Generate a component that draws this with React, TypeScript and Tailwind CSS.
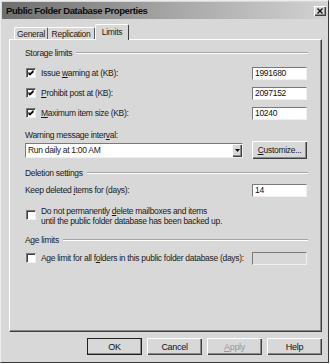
const font = "font-['Liberation_Sans',Arial,sans-serif]";

const raised =
  "bg-[#d8d8d8] shadow-[inset_1px_1px_#ffffff,inset_-1px_-1px_#404040,inset_-2px_-2px_#8a8a8a]";
const sunken = "border border-t-[#7a7a7a] border-l-[#7a7a7a] border-b-[#f0f0f0] border-r-[#f0f0f0]";

function Check({ on }: { on?: boolean }) {
  return (
    <div
      className={`w-[10px] h-[10px] shrink-0 bg-white ${sunken} shadow-[inset_1px_1px_#404040] flex items-center justify-center`}
    >
      {on && (
        <svg width="8" height="8" viewBox="0 0 8 8">
          <path d="M1.5 3.5 L3 5 L6.5 1.5 M1.5 4.5 L3 6 L6.5 2.5" stroke="#111" strokeWidth="1.2" fill="none" />
        </svg>
      )}
    </div>
  );
}

function Field({ value, disabled }: { value?: string; disabled?: boolean }) {
  return (
    <div
      className={`w-[55px] h-[13px] ${sunken} ${disabled ? "bg-[#d8d8d8]" : "bg-white"} pl-[2px] flex items-center text-[#111]`}
    >
      {value}
    </div>
  );
}

function Group({ title }: { title: string }) {
  return (
    <div className="h-[10px] flex items-center gap-[4px]">
      <span>{title}</span>
      <div className="flex-1 border-t border-t-[#a4a4a4] border-b border-b-white" />
    </div>
  );
}

function LimitRow({ pre, u, post, value }: { pre: string; u: string; post: string; value: string }) {
  return (
    <div className="h-[20px] flex items-center">
      <div className="pl-[1px]">
        <Check on />
      </div>
      <span className="ml-[5px]">
        {pre}
        <u>{u}</u>
        {post}
      </span>
      <div className="ml-auto">
        <Field value={value} />
      </div>
    </div>
  );
}

function Button({ children, main, dim }: { children: React.ReactNode; main?: boolean; dim?: boolean }) {
  return (
    <div
      className={`w-[55px] h-[17px] flex items-center justify-center text-[9px] ${raised} ${
        main ? "outline outline-1 outline-[#202020] -outline-offset-1" : ""
      } ${dim ? "text-[#9a9a9a]" : "text-[#111]"}`}
    >
      {children}
    </div>
  );
}

export default function App() {
  return (
    <div
      className={`w-[330px] h-[364px] bg-white ${font} text-[8.5px] tracking-[-0.3px] leading-[10px] text-[#1a1a1a] whitespace-nowrap`}
    >
      <div className="w-[329px] h-[363px] bg-[#d8d8d8] border border-t-[#ececec] border-l-[#ececec] border-r-[#3a3a3a] border-b-[#3a3a3a] flex flex-col pt-[1px]">
        {/* Title bar */}
        <div className="mx-[1px] h-[17px] bg-linear-to-r from-[#6e6e6e] via-[#a4a4a4] to-[#d2d2d2] flex items-center justify-between pl-[4px] pr-[1px]">
          <span className="text-[9.5px] tracking-[-0.4px] font-bold text-[#0c0c0c]">
            Public Folder Database Properties
          </span>
          <div className={`w-[12px] h-[10px] ${raised} flex items-center justify-center`}>
            <svg width="6" height="6" viewBox="0 0 6 6">
              <path d="M0.5 0.5 L5.5 5.5 M5.5 0.5 L0.5 5.5" stroke="#111" strokeWidth="1.4" />
            </svg>
          </div>
        </div>

        {/* Tabs */}
        <div className="h-[20px] ml-[8px] pl-[5px] flex items-end">
          <div className="w-[34px] h-[12px] border-t border-l border-t-white border-l-white border-r border-r-[#5a5a5a] rounded-t-[2px] flex items-center justify-center">
            General
          </div>
          <div className="w-[47px] h-[12px] border-t border-t-white border-r border-r-[#5a5a5a] rounded-tr-[2px] flex items-center justify-center">
            Replication
          </div>
          <div className="relative z-10 -mb-px w-[34px] h-[16px] bg-[#d8d8d8] border-t border-l border-t-white border-l-white border-r border-r-[#404040] rounded-t-[2px] flex justify-center pt-[2px]">
            Limits
          </div>
        </div>

        {/* Tab panel */}
        <div className="ml-[8px] w-[313px] h-[293px] border border-t-white border-l-white border-r-[#404040] border-b-[#404040] shadow-[inset_-1px_-1px_#8a8a8a] pl-[15px] pr-[13px] flex flex-col">
          <div className="mt-[8px]">
            <Group title="Storage limits" />
          </div>
          <div className="mt-[5px] pr-[1px]">
            <LimitRow pre="Issue " u="w" post="arning at (KB):" value="1991680" />
            <LimitRow pre="" u="P" post="rohibit post at (KB):" value="2097152" />
            <LimitRow pre="" u="M" post="aximum item size (KB):" value="10240" />
          </div>
          <div className="mt-[7px] h-[10px]">
            Warning message inter<u>v</u>al:
          </div>
          <div className="h-[20px] flex items-center pr-[1px]">
            <div className={`w-[218px] h-[15px] bg-white ${sunken} flex items-center`}>
              <span className="pl-[2px] flex-1">Run daily at 1:00 AM</span>
              <div className={`w-[10px] h-[13px] ${raised} flex items-center justify-center`}>
                <svg width="5" height="3" viewBox="0 0 5 3">
                  <path d="M0 0 H5 L2.5 3 Z" fill="#111" />
                </svg>
              </div>
            </div>
            <div className="ml-auto">
              <div className={`w-[55px] h-[18px] ${raised} flex items-center justify-center`}>
                <span>
                  <u>C</u>ustomize...
                </span>
              </div>
            </div>
          </div>

          <div className="mt-[8px]">
            <Group title="Deletion settings" />
          </div>
          <div className="mt-[2px] h-[20px] flex items-center pr-[1px]">
            <span>
              Keep deleted <u>i</u>tems for (days):
            </span>
            <div className="ml-auto">
              <Field value="14" />
            </div>
          </div>
          <div className="mt-[6px] flex items-start">
            <div className="pl-[1px] pt-[4px]">
              <Check />
            </div>
            <div className="ml-[5px]">
              <div>
                Do not permanently <u>d</u>elete mailboxes and items
              </div>
              <div>until the public folder database has been backed up.</div>
            </div>
          </div>

          <div className="mt-[9px]">
            <Group title="Age limits" />
          </div>
          <div className="mt-[3px] h-[20px] flex items-center pr-[1px]">
            <div className="pl-[1px]">
              <Check />
            </div>
            <span className="ml-[5px]">
              Age limit for all f<u>o</u>lders in this public folder database (days):
            </span>
            <div className="ml-auto">
              <Field disabled />
            </div>
          </div>
        </div>

        {/* Dialog buttons */}
        <div className="mt-[6px] flex justify-end gap-[5px] pr-[6px]">
          <Button main>OK</Button>
          <Button>Cancel</Button>
          <Button dim>
            <span>
              <u>A</u>pply
            </span>
          </Button>
          <Button>Help</Button>
        </div>
      </div>
    </div>
  );
}
